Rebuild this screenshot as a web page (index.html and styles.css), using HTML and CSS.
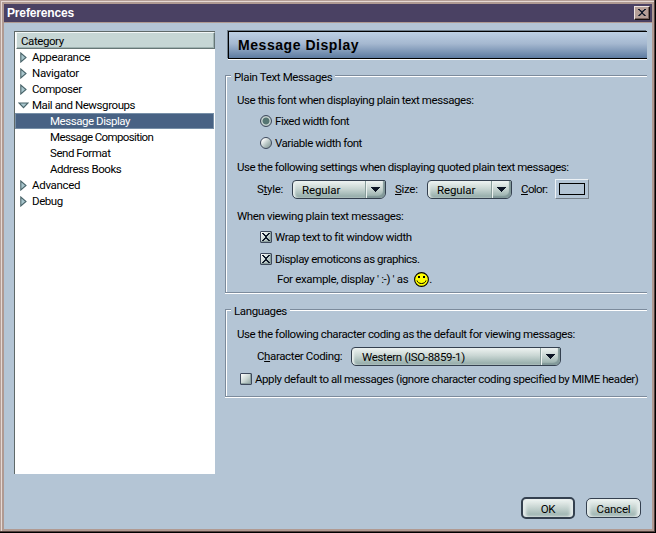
FILE: index.html
```html
<!DOCTYPE html>
<html lang="en">
<head>
<meta charset="utf-8">
<title>Preferences</title>
<link rel="stylesheet" href="styles.css">
</head>
<body>
<svg width="0" height="0" class="defs">
  <defs>
    <symbol id="closed" viewBox="0 0 7 11"><path d="M.8 1v9L6 5.5z" fill="#a9c6cd" stroke="#49646a" stroke-width="1.1"/></symbol>
    <symbol id="opened" viewBox="0 0 11 7"><path d="M1 1h9L5.5 5.7z" fill="#a9c6cd" stroke="#49646a" stroke-width="1.1"/></symbol>
    <symbol id="arrow" viewBox="0 0 9 5"><path d="M0 0h9v1H8v1H7v1H6v1H5v1H4V4H3V3H2V2H1V1H0z" fill="#0c1424"/></symbol>
    <symbol id="cross" viewBox="0 0 8 8"><path d="M0 0h2v1h1v1h2V1h1V0h2v1H7v1H6v1H5v2h1v1h1v1h1v1H6V7H5V6H3v1H2v1H0V7h1V6h1V5h1V3H2V2H1V1H0z" fill="#111a2a"/></symbol>
  </defs>
</svg>
<div class="window">
  <div class="titlebar"><span class="caption">Preferences</span>
    <span class="close"><svg width="8" height="7" viewBox="0 0 8 8" preserveAspectRatio="none"><use href="#cross"/></svg></span>
  </div>
  <div class="body">
    <div class="tree">
      <div class="tree-head">Category</div>
      <div class="item item-top"><svg class="twisty" width="7" height="11"><use href="#closed"/></svg>Appearance</div>
      <div class="item item-top"><svg class="twisty" width="7" height="11"><use href="#closed"/></svg>Navigator</div>
      <div class="item"><svg class="twisty" width="7" height="11"><use href="#closed"/></svg>Composer</div>
      <div class="item"><svg class="twisty twisty-open" width="11" height="7"><use href="#opened"/></svg>Mail and Newsgroups</div>
      <div class="item child selected">Message Display</div>
      <div class="item child">Message Composition</div>
      <div class="item child short">Send Format</div>
      <div class="item child short">Address Books</div>
      <div class="item item-top"><svg class="twisty" width="7" height="11"><use href="#closed"/></svg>Advanced</div>
      <div class="item"><svg class="twisty" width="7" height="11"><use href="#closed"/></svg>Debug</div>
    </div>
    <div class="panel">
      <div class="heading">Message Display</div>
      <section class="group plain">
        <div class="legend">Plain Text Messages</div>
        <div class="row intro">Use this font when displaying plain text messages:</div>
        <div class="row option tight"><span class="radio on"></span>Fixed width font</div>
        <div class="row option tight"><span class="radio"></span>Variable width font</div>
        <div class="row quoted">Use the following settings when displaying quoted plain text messages:</div>
        <div class="row settings">
          <span class="lab-style">S<u>t</u>yle:</span>
          <span class="select"><span class="value regular">Regular</span><span class="drop"><svg width="9" height="5"><use href="#arrow"/></svg></span></span>
          <span class="lab-size"><u>S</u>ize:</span>
          <span class="select narrow"><span class="value regular">Regular</span><span class="drop"><svg width="9" height="5"><use href="#arrow"/></svg></span></span>
          <span class="lab-color"><u>C</u>olor:</span>
          <span class="color"><span class="swatch"></span></span>
        </div>
        <div class="row viewing">When viewing plain text messages:</div>
        <div class="row option"><span class="check"><svg width="8" height="8"><use href="#cross"/></svg></span>Wrap text to fit window width</div>
        <div class="row option tight"><span class="check"><svg width="8" height="8"><use href="#cross"/></svg></span>Display emoticons as graphics.</div>
        <div class="row example"><span>For example, display ' :-) ' as</span>
          <svg class="smiley" width="15" height="15" viewBox="0 0 15 15"><circle cx="7.5" cy="7.5" r="6.9" fill="#ff0" stroke="#000" stroke-width="1.1"/><path d="M4 4h2v2H4zM9 4h2v2H9z"/><path d="M3 8.5c1 4 8 4 9 0" fill="none" stroke="#000"/></svg><span>.</span>
        </div>
      </section>
      <section class="group languages">
        <div class="legend">Languages</div>
        <div class="row coding-intro">Use the following character coding as the default for viewing messages:</div>
        <div class="row coding"><span class="lab-coding">C<u>h</u>aracter Coding:</span>
          <span class="select wide"><span class="value">Western (ISO-8859-1)</span><span class="drop"><svg width="9" height="5"><use href="#arrow"/></svg></span></span>
        </div>
        <div class="row apply"><span class="check"></span>Apply default to all messages (ignore character coding specified by MIME header)</div>
      </section>
    </div>
  </div>
  <div class="buttons"><span class="button default">OK</span><span class="button">Cancel</span></div>
</div>
</body>
</html>
```
FILE: styles.css
```css
* { box-sizing: border-box; }
body { margin: 0; background: #000; color: #000; font: 11.5px/14px Roboto, "Liberation Sans", sans-serif; letter-spacing: -.42px; white-space: nowrap; }
svg { display: block; flex: none; }
.defs { position: absolute; }
u { text-decoration: underline; text-decoration-thickness: 1px; text-underline-offset: 1px; }

.window {
  width: 656px; height: 533px; display: flex; flex-direction: column;
  padding: 4px; background: #b4c5d5;
  box-shadow: inset -1px -1px #000, inset -2px -2px #55413f, inset 1px 1px #b59f97, inset 2px 2px #e5d9d4, inset -4px -4px #b09a92, inset 4px 4px #b09a92;
}
.titlebar { flex: none; height: 19px; background: #4a4163; border-bottom: 1px solid #b09a92; display: flex; justify-content: space-between; padding: 2px 2px 0 3px; }
.caption { color: #fff; font: bold 12px/14px "Liberation Sans", sans-serif; letter-spacing: -.15px; }
.close { width: 16px; height: 14px; background: #b59f97; border: 1px solid; border-color: #eee4df #171010 #171010 #eee4df; box-shadow: inset -1px -1px #76625c; padding: 2px 0 0 3px; }

.body { flex: none; height: 451px; display: flex; padding: 8px 5px 0 10px; gap: 10px; }
.tree { width: 201px; height: 443px; background: #fff; border: solid #5f6969; border-width: 1px 0 0 1px; flex: none; }
.tree-head { width: 199px; height: 17px; margin-left: 1px; padding-left: 4px; background: #c6d6d5; border: 1px solid; border-color: #f2f7f7 #667676 #667676 #f2f7f7; line-height: 17px; box-shadow: inset -1px -1px #9fb2b1; }
.item { height: 16px; line-height: 17px; padding-left: 5px; display: flex; align-items: center; width: 199px; }
.item-top { letter-spacing: -.3px; }
.twisty { margin-right: 5px; }
.twisty-open { margin: 0 3px 0 -2px; }
.child { padding-left: 35px; letter-spacing: -.62px; }
.short { letter-spacing: -.45px; }
.selected { background: #486284; border: 1px solid #7890a8; padding-left: 34px; color: #fff; letter-spacing: -.45px; }

.panel { flex: none; width: 422px; }
.heading { margin-left: 3px; height: 28px; padding-left: 9px; border: solid #000; border-width: 1px 0 1px 1px; box-shadow: -1px -1px #6f7d8a, 0 1px #fff; background: linear-gradient(#bdd0e4, #a5b8d0 45%, #5d7ba1); font: bold 14px/27px "Liberation Sans", sans-serif; letter-spacing: .55px; }

.group { border: solid #7c8b9c; border-width: 1px 0 1px 1px; box-shadow: inset 1px 1px #fff, 0 1px #fff; padding-left: 11px; }
.plain { height: 218px; margin-top: 16px; }
.languages { height: 88px; margin-top: 16px; }
.legend { display: inline-block; vertical-align: top; background: #b4c5d5; margin: -6px 0 0 -6px; padding: 0 3px; height: 14px; line-height: 15px; letter-spacing: -.38px; }
.row { display: flex; align-items: center; height: 22px; }
.intro, .coding-intro { height: 20px; }
.coding-intro { letter-spacing: -.41px; }
.option { padding-left: 23px; letter-spacing: -.4px; }
.tight { letter-spacing: -.48px; }
.quoted { margin-top: 2px; letter-spacing: -.46px; }
.settings { padding-left: 20px; }
.viewing { height: 20px; margin-top: 6px; letter-spacing: -.37px; }
.example { height: 18px; padding-left: 40px; letter-spacing: -.34px; }
.smiley { margin-left: 6px; }
.coding { height: 24px; padding-left: 20px; letter-spacing: -.38px; }
.apply { padding-left: 3px; letter-spacing: -.42px; }

.lab-style { width: 35px; letter-spacing: -.3px; }
.lab-size { width: 32px; margin-left: 9px; letter-spacing: -.3px; }
.lab-color { width: 34px; margin-left: 9px; letter-spacing: -.6px; }
.lab-coding { width: 94px; }

.select { width: 94px; height: 19px; display: flex; background: linear-gradient(#eef3f1, #c9d6d3 45%, #a4b9b6 80%, #8ea4a2); border: 1px solid #34404f; border-radius: 4px 2px 6px 5px; box-shadow: inset 2px 0 2px #e9f0ee; }
.narrow { width: 85px; }
.wide { width: 210px; }
.value { flex: 1; padding-left: 10px; line-height: 18px; letter-spacing: -.33px; }
.regular { padding-left: 9px; letter-spacing: -.1px; }
.drop { width: 20px; border-left: 1px solid #889d9b; box-shadow: inset 1px 0 #edf3f1, inset -2px -2px 1px #82999a; border-radius: 0 1px 5px 0; padding: 6px 0 0 5px; }
.color { width: 34px; height: 20px; border: 1px solid; border-color: #edf2f6 #78828c #78828c #edf2f6; padding: 3px; }
.swatch { display: block; width: 26px; height: 12px; border: 1px solid #000; }

.radio { width: 12px; height: 12px; border-radius: 50%; border: 1px solid #3e495c; margin-right: 3px; flex: none; background: linear-gradient(135deg, #fff 15%, #b1c1bf 60%, #7c908f); }
.radio.on { background: radial-gradient(circle, #557572 0 3px, #d3dfdc 4px, #a8b8b7 5px); }
.check { width: 12px; height: 12px; border: 1px solid #3e495c; border-radius: 1px; margin-right: 3px; flex: none; padding: 1px; background: linear-gradient(135deg, #fff, #cbd7d4 50%, #8da19f); box-shadow: inset -1px -1px #8c9f9f; }

.buttons { display: flex; justify-content: flex-end; align-items: center; gap: 11px; padding: 23px 11px 0 0; height: 45px; letter-spacing: -.2px; }
.button { width: 55px; height: 20px; border: 1px solid #34404f; border-radius: 5px; background: linear-gradient(#f2f6f4, #c9d6d3 45%, #a4b9b6 85%, #93aaa7); box-shadow: inset 3px 0 3px #e5eceb, inset -3px 0 3px #e5eceb; text-align: center; line-height: 20px; }
.default { width: 54px; height: 22px; border-width: 2px; }
```
